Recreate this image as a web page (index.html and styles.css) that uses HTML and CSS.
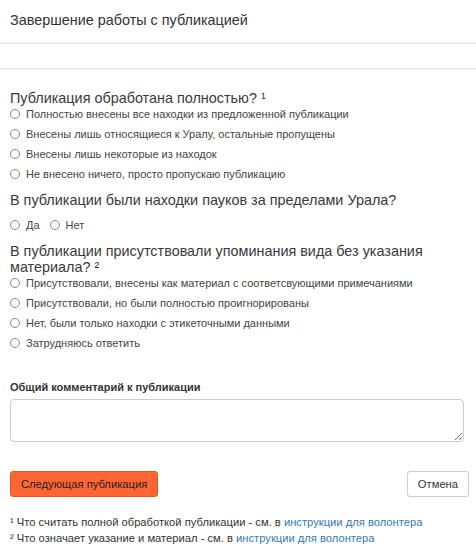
FILE: index.html
```html
<!DOCTYPE html>
<html lang="ru">
<head>
  <meta charset="UTF-8">
  <title>Завершение работы с публикацией</title>
  <link rel="stylesheet" href="styles.css">
</head>
<body>
  <div class="modal">
    <div class="modal-header">
      <h4 class="modal-title">Завершение работы с публикацией</h4>
    </div>
    <div class="modal-spacer"></div>
    <div class="modal-body">
      <div class="question">
        <h4>Публикация обработана полностью? ¹</h4>
        <label class="option"><input type="radio" name="full"> Полностью внесены все находки из предложенной публикации</label>
        <label class="option"><input type="radio" name="full"> Внесены лишь относящиеся к Уралу, остальные пропущены</label>
        <label class="option"><input type="radio" name="full"> Внесены лишь некоторые из находок</label>
        <label class="option"><input type="radio" name="full"> Не внесено ничего, просто пропускаю публикацию</label>
      </div>
      <div class="question">
        <h4>В публикации были находки пауков за пределами Урала?</h4>
        <div class="inline">
          <label class="option"><input type="radio" name="outside"> Да</label>
          <label class="option"><input type="radio" name="outside"> Нет</label>
        </div>
      </div>
      <div class="question">
        <h4>В публикации присутствовали упоминания вида без указания материала? ²</h4>
        <label class="option"><input type="radio" name="material"> Присутствовали, внесены как материал с соответсвующими примечаниями</label>
        <label class="option"><input type="radio" name="material"> Присутствовали, но были полностью проигнорированы</label>
        <label class="option"><input type="radio" name="material"> Нет, были только находки с этикеточными данными</label>
        <label class="option"><input type="radio" name="material"> Затрудняюсь ответить</label>
      </div>
      <div class="comment">
        <label for="comment">Общий комментарий к публикации</label>
        <textarea id="comment"></textarea>
      </div>
      <div class="buttons">
        <button type="button" class="btn btn-next">Следующая публикация</button>
        <button type="button" class="btn btn-cancel">Отмена</button>
      </div>
      <div class="notes">
        <p>¹ Что считать полной обработкой публикации - см. в <a href="#">инструкции для волонтера</a></p>
        <p>² Что означает указание и материал - см. в <a href="#">инструкции для волонтера</a></p>
      </div>
    </div>
  </div>
</body>
</html>
```

FILE: styles.css
```css
* {
  margin: 0;
  padding: 0;
  box-sizing: border-box;
}

body {
  font-family: 'Liberation Sans', Arial, sans-serif;
  color: #333;
  background: #fff;
}

.modal-header {
  height: 44px;
  padding: 12px 10px;
  border-bottom: 1px solid #e5e5e5;
}

.modal-title {
  font-size: 14.4px;
  font-weight: normal;
  line-height: 16px;
}

.modal-spacer {
  height: 25px;
  border-bottom: 1px solid #e5e5e5;
}

.modal-body {
  padding: 21px 12px 0 10px;
}

.question {
  margin-bottom: 8px;
}

.question h4 {
  font-size: 14.4px;
  font-weight: normal;
  line-height: 16px;
  margin-bottom: -2px;
  color: #3a3a3a;
}

.option {
  display: flex;
  align-items: center;
  gap: 6px;
  font-size: 11px;
  line-height: 20px;
  color: #444;
}

.inline {
  display: flex;
  gap: 10px;
  margin-top: 9px;
}

.option input {
  appearance: none;
  width: 10px;
  height: 10px;
  border: 1px solid #888;
  border-radius: 50%;
  background: #fff;
}

.comment {
  margin-top: 27px;
}

.comment label {
  display: block;
  font-size: 11px;
  font-weight: bold;
  line-height: 14px;
  margin-bottom: 5px;
}

.comment textarea {
  display: block;
  width: 100%;
  height: 43px;
  border: 1px solid #ccc;
  border-radius: 4px;
}

.buttons {
  display: flex;
  justify-content: space-between;
  margin-top: 29px;
  margin-right: -5px;
}

.btn {
  height: 26px;
  padding: 0 10px;
  font-family: inherit;
  font-size: 11.2px;
  border-radius: 3px;
  border: 1px solid #ccc;
  background: #fff;
  color: #333;
}

.btn-next {
  background: #ff6633;
  border-color: #e05a2a;
  color: #222;
}

.notes {
  margin-top: 17px;
  font-size: 11.2px;
  line-height: 16px;
  color: #333;
}

.notes a {
  color: #337ab7;
  text-decoration: none;
}
```
